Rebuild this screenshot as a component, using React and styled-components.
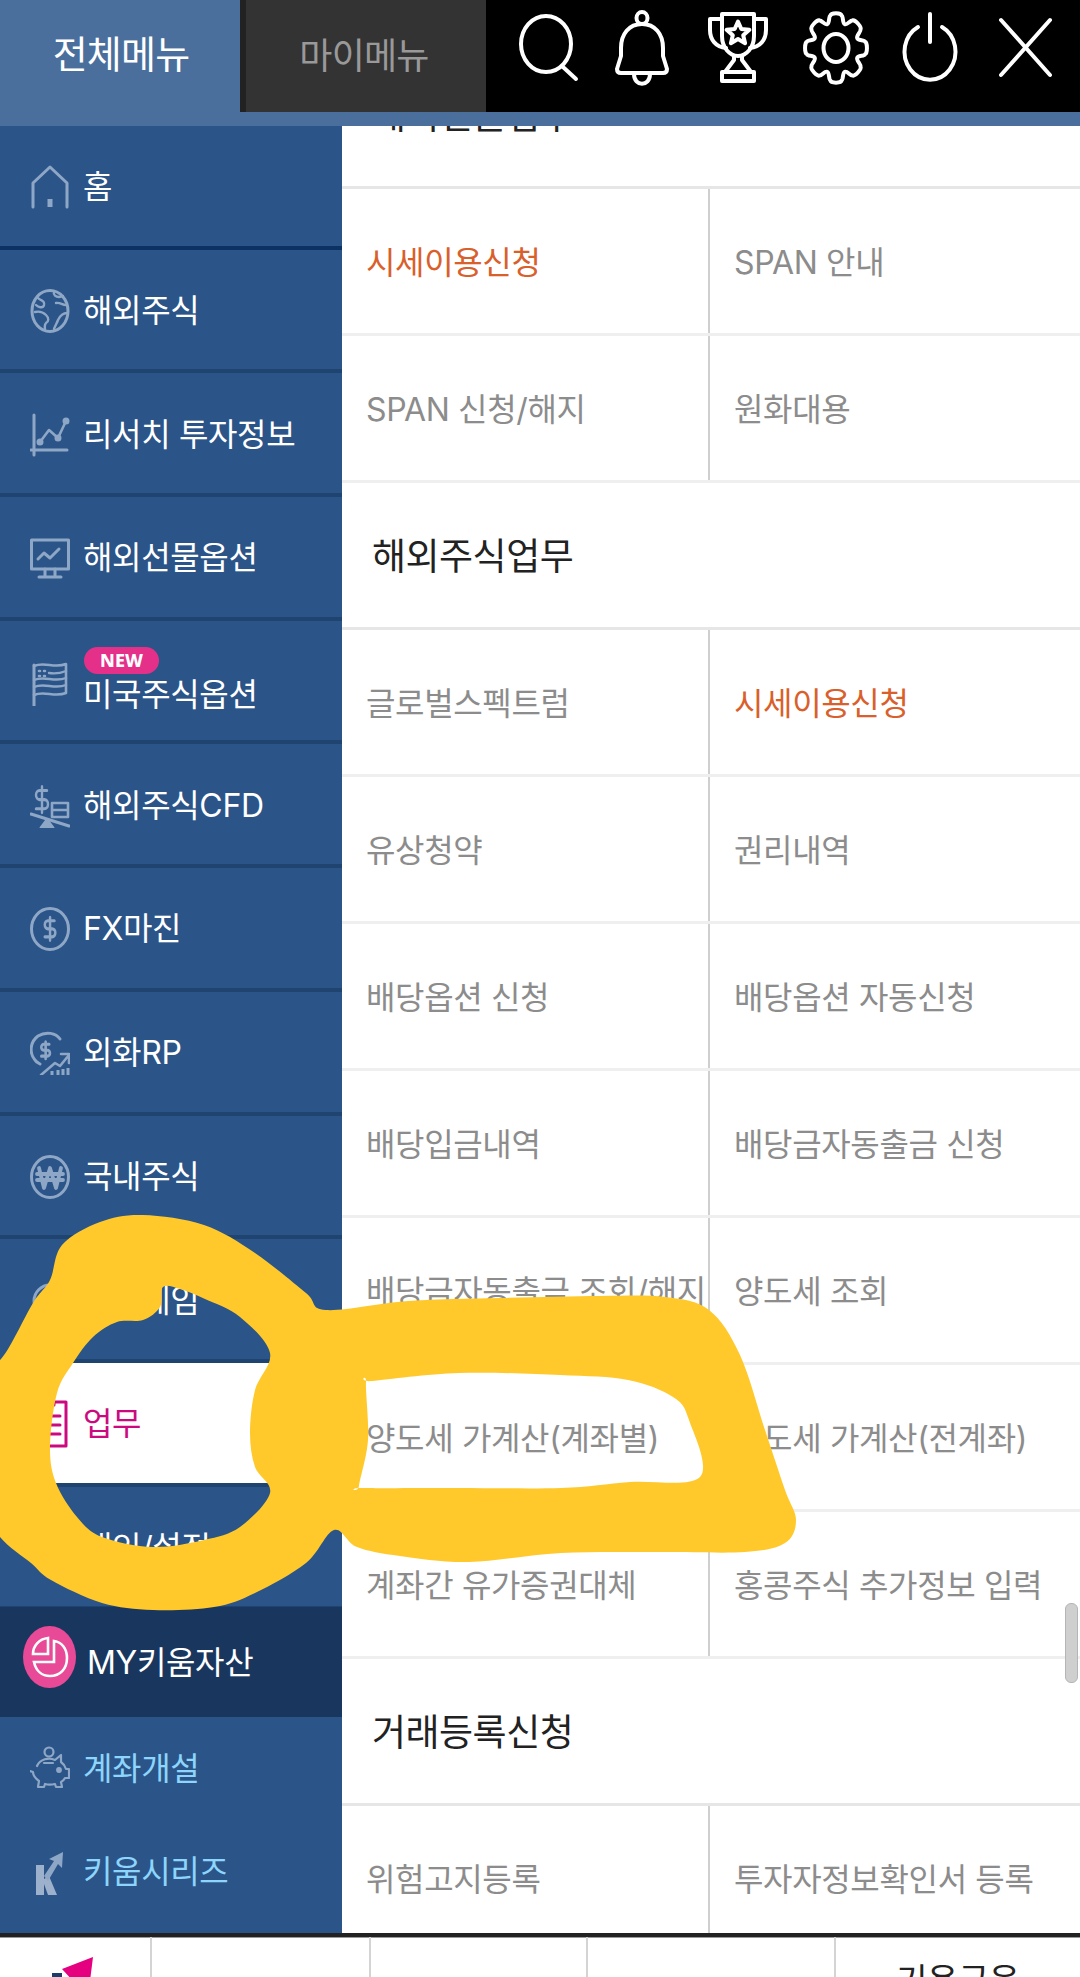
import styled, { createGlobalStyle } from "styled-components";

const GlobalStyle = createGlobalStyle`
  html, body {
    margin: 0;
    padding: 0;
    background: #fff;
  }
  body {
    font-family: "Inter", "Noto Sans CJK KR", sans-serif;
  }
`;

const Page = styled.div`
  position: relative;
  width: 1080px;
  height: 1977px;
  overflow: hidden;
  display: flex;
  flex-direction: column;
`;

const Header = styled.header`
  height: 126px;
  flex: none;
  background: #4a6f9c;
`;

const TopBar = styled.div`
  display: flex;
  height: 112px;
`;

const AllTab = styled.div`
  width: 240px;
  display: flex;
  align-items: center;
  justify-content: center;
  padding: 0 0 9px 2px;
  box-sizing: border-box;
  color: #fff;
  font-size: 38px;
  letter-spacing: -0.8px;
`;

const MyTab = styled.div`
  width: 246px;
  display: flex;
  align-items: center;
  justify-content: center;
  padding: 0 4px 6px 0;
  box-sizing: border-box;
  background: #333;
  border-left: 6px solid #222;
  color: #999;
  font-size: 36px;
  letter-spacing: -0.8px;
`;

const IconBar = styled.div`
  flex: 1;
  display: flex;
  background: #000;
  padding-left: 14px;
`;

const HeaderIcon = styled.svg`
  width: 96px;
  height: 96px;
  flex: none;
  fill: none;
  stroke: #fff;
  stroke-width: 4;
  stroke-linecap: round;
  stroke-linejoin: round;
`;

const Main = styled.main`
  flex: none;
  height: 1807px;
  display: flex;
`;

const Sidebar = styled.nav`
  width: 342px;
  flex: none;
  background: #2b5488;
  display: flex;
  flex-direction: column;
`;

const MenuList = styled.div`
  height: 1481px;
  flex: none;
  overflow: hidden;
`;

const MenuRow = styled.div`
  height: 123.7px;
  box-sizing: border-box;
  display: flex;
  align-items: center;
  padding: 3px 0 0 30px;
  gap: 13px;
  background: ${(props) => (props.$active ? "#fff" : "transparent")};
  border-bottom: 4px solid ${(props) => (props.$strong ? "#0c3263" : "#1f4470")};
  color: ${(props) => (props.$active ? "#cc0a80" : "#fff")};
`;

const MenuIcon = styled.svg`
  width: 40px;
  height: ${(props) => (props.$tall ? "48px" : "44px")};
  flex: none;
  fill: none;
  stroke: ${(props) => props.$color || "#8fa7c6"};
  stroke-width: 3;
  stroke-linecap: round;
  stroke-linejoin: round;
`;

const MenuLabel = styled.span`
  font-size: 32px;
  letter-spacing: -0.35px;
  line-height: 36px;
  white-space: nowrap;
`;

const LabelStack = styled.div`
  display: flex;
  flex-direction: column;
  align-items: flex-start;
  gap: 3px;
  margin-top: -4px;
`;

const NewBadge = styled.span`
  width: 75px;
  height: 27px;
  margin-left: 1px;
  border-radius: 14px;
  background: #e5308a;
  color: #fff;
  font-family: "Noto Sans", sans-serif;
  font-size: 18px;
  font-weight: 800;
  line-height: 27px;
  text-align: center;
`;

const AssetRow = styled.div`
  height: 110px;
  flex: none;
  background: #19375e;
  display: flex;
  align-items: center;
  padding: 2px 0 0 23px;
  gap: 11px;
  color: #fff;
  box-sizing: border-box;
`;

const AssetIcon = styled.div`
  width: 53px;
  height: 62px;
  margin-bottom: 12px;
  border-radius: 50%;
  background: #e84a97;
  display: flex;
  align-items: center;
  justify-content: center;
`;

const ExtraRow = styled.div`
  height: 103px;
  flex: none;
  display: flex;
  align-items: center;
  padding-left: 30px;
  gap: 13px;
  color: #8dd5fb;
`;

const Panel = styled.section`
  flex: 1;
  overflow: hidden;
  background: #fff;
`;

const PanelList = styled.div`
  margin-top: -84px;
`;

const Heading = styled.div`
  height: 147px;
  box-sizing: border-box;
  display: flex;
  align-items: center;
  padding: 0 0 2px 30px;
  border-bottom: 3px solid #e6e6e6;
  color: #222;
  font-size: 37px;
  letter-spacing: -0.5px;
`;

const CellRow = styled.div`
  height: 147px;
  box-sizing: border-box;
  display: grid;
  grid-template-columns: 368px 1fr;
  border-bottom: 3px solid #efefef;
`;

const Cell = styled.div`
  display: flex;
  align-items: center;
  padding: 0 0 2px 24px;
  box-sizing: border-box;
  font-size: 32px;
  letter-spacing: -0.35px;
  white-space: nowrap;
  color: ${(props) => (props.$accent ? "#d9602b" : "#8c8c8c")};
  &:first-child {
    border-right: 2px solid #cfcfcf;
  }
`;

const Footer = styled.footer`
  flex: none;
  height: 44px;
  border-top: 4px solid #222;
  box-sizing: border-box;
  display: grid;
  grid-template-columns: 150px 219px 217px 248px 1fr;
  background: #fff;
  box-shadow: inset 0 1px 0 #999;
`;

const FooterCell = styled.div`
  border-left: ${(props) => (props.$first ? "none" : "2px solid #d4d4d4")};
  text-align: center;
  color: #222;
  font-size: 34px;
  line-height: 36px;
  padding-top: 26px;
  letter-spacing: -0.4px;
`;

const FooterLogo = styled.svg`
  display: block;
  margin: -6px 0 0 50px;
  width: 50px;
  height: 24px;
`;

const ScrollThumb = styled.div`
  position: absolute;
  left: 1065px;
  top: 1603px;
  width: 13px;
  height: 80px;
  box-sizing: border-box;
  border-radius: 6px;
  background: #cfcfcf;
  border: 1px solid #b5b5b5;
`;

const Scribble = styled.svg`
  position: absolute;
  top: 0;
  left: 0;
  width: 1080px;
  height: 1977px;
  pointer-events: none;
`;

// closed Catmull-Rom curve through the points
function smooth(pts) {
  const n = pts.length;
  let d = `M${pts[0][0]} ${pts[0][1]}`;
  for (let i = 0; i < n; i++) {
    const p0 = pts[(i - 1 + n) % n];
    const p1 = pts[i];
    const p2 = pts[(i + 1) % n];
    const p3 = pts[(i + 2) % n];
    const c1x = p1[0] + (p2[0] - p0[0]) / 6;
    const c1y = p1[1] + (p2[1] - p0[1]) / 6;
    const c2x = p2[0] - (p3[0] - p1[0]) / 6;
    const c2y = p2[1] - (p3[1] - p1[1]) / 6;
    d += `C${c1x} ${c1y} ${c2x} ${c2y} ${p2[0]} ${p2[1]}`;
  }
  return d + "Z";
}

const outer = [
  [50, 1280], [62, 1245], [100, 1222], [143, 1215], [204, 1225], [255, 1253], [306, 1293],
  [326, 1310], [408, 1301], [500, 1298], [600, 1296], [665, 1297], [709, 1310], [740, 1355],
  [765, 1430], [785, 1490], [796, 1520], [785, 1543], [745, 1552], [660, 1552], [561, 1553],
  [469, 1562], [400, 1556], [357, 1547], [334, 1530], [306, 1563], [255, 1593], [214, 1607],
  [153, 1610], [102, 1603], [51, 1580], [31, 1563], [0, 1537], [-20, 1500], [-20, 1350], [0, 1360], [33, 1303],
];
const ringHole = [
  [163, 1287], [160, 1307], [143, 1320], [117, 1322], [93, 1337], [73, 1363], [57, 1393],
  [50, 1447], [56, 1483], [77, 1517], [102, 1537], [153, 1547], [204, 1540], [240, 1527],
  [270, 1493], [255, 1467], [250, 1433], [255, 1390], [270, 1353], [240, 1317], [205, 1299], [180, 1289],
];
const boxHole = [
  [366, 1382], [372, 1381], [459, 1373], [560, 1375], [628, 1380], [673, 1397], [689, 1420], [700, 1477],
  [630, 1482], [561, 1488], [459, 1488], [362, 1488], [359, 1486], [368, 1440],
];

function gearPath() {
  const cx = 48;
  const cy = 48;
  const pt = (deg, r) => {
    const a = (deg * Math.PI) / 180;
    return `${(cx + r * Math.cos(a)).toFixed(1)} ${(cy + r * 1.12 * Math.sin(a)).toFixed(1)}`;
  };
  let d = "";
  for (let i = 0; i < 8; i++) {
    const t = i * 45 - 90;
    d += `${i === 0 ? "M" : "L"}${pt(t - 22.5, 23)}`;
    d += `C${pt(t - 16, 23)} ${pt(t - 15, 29)} ${pt(t - 11, 29.5)}`;
    d += `C${pt(t - 9, 32)} ${pt(t + 9, 32)} ${pt(t + 11, 29.5)}`;
    d += `C${pt(t + 15, 29)} ${pt(t + 16, 23)} ${pt(t + 22.5, 23)}`;
  }
  return d + "Z";
}

const dollar = "M17 5H9.5a3.5 3.5 0 0 0 0 7h5a3.5 3.5 0 0 1 0 7H6M12 2v20";

const iconPaths = {
  home: (
    <>
      <path d="M3 42V18L20 2l17 16v24" />
      <path d="M20 34v8" strokeWidth="5" strokeLinecap="butt" />
    </>
  ),
  globe: (
    <>
      <ellipse cx="20" cy="22" rx="18" ry="20.5" />
      <path d="M8 9c3 3 7 2 6 7-1 4-6 2-8 0M5 23c4-1 8 0 11 3 3 3 3 6 0 8-2 2-1 5-1 7M24 3c-1 3 2 5 5 5 2 0 4-1 4-1M26 14c4-1 6 2 10 2M37 24c-4 0-7 3-9 7-1 3-3 6-4 9" strokeWidth="2.4" />
    </>
  ),
  chart: (
    <>
      <path d="M4 2v40M1 37h36" />
      <path d="M10 29l9-12 9 8 8-17" strokeWidth="2.6" />
      <circle cx="10" cy="29" r="2" fill="#8fa7c6" />
      <circle cx="28" cy="25" r="2" fill="#8fa7c6" />
      <circle cx="36" cy="8" r="2" fill="#8fa7c6" />
    </>
  ),
  monitor: (
    <>
      <rect x="1.5" y="4" width="37" height="29" />
      <path d="M8 23l6-6 6 5 9-9" />
      <path d="M15 33v7M25 33v7M9 41h22" />
    </>
  ),
  flag: (
    <>
      <path d="M4 7v41" />
      <path d="M4 8c11-5 20 3 32-2v29c-12 5-21-3-32 2" strokeWidth="2.6" />
      <path d="M4 22c11-5 20 3 32-2M4 29c11-5 20 3 32-2M19 15c6 1 12 0 17-2" strokeWidth="2.4" />
      <path d="M9 13h1M14 13h1M9 18h1M14 18h1" strokeWidth="2.6" />
    </>
  ),
  balance: (
    <>
      <g transform="translate(0 0) scale(1 1.3)">
        <path d={dollar} strokeWidth="2.4" />
      </g>
      <rect x="22" y="19" width="16" height="14" strokeWidth="2.6" />
      <path d="M23 26h14" strokeWidth="2.4" />
      <path d="M1 30l38 12" />
      <path d="M17 36l6 8H11z" fill="#8fa7c6" />
    </>
  ),
  dollar: (
    <>
      <ellipse cx="20" cy="22" rx="18.5" ry="20.5" />
      <g transform="translate(9.5 8) scale(.88 1.15)">
        <path d={dollar} strokeWidth="2.8" />
      </g>
    </>
  ),
  rp: (
    <>
      <path d="M30 8C26 2 16 0 8 5 0 11-1 22 5 29c1 2 3 3 5 4" />
      <g transform="translate(7 9) scale(.72 .85)">
        <path d={dollar} strokeWidth="3.6" />
      </g>
      <path d="M11 44l14-12 5 3 9-11M31 23h8v9" strokeWidth="2.6" />
      <path d="M22 44v-4M28 44v-5M33 44v-6M38 44v-7" strokeWidth="3" strokeLinecap="butt" />
    </>
  ),
  won: (
    <>
      <ellipse cx="20" cy="22" rx="18.5" ry="20.5" />
      <path d="M9 13l5 20 6-20 6 20 5-20M7 19h26M7 25h26" strokeWidth="3.8" />
    </>
  ),
  game: <circle cx="20" cy="22" r="16" />,
  doc: (
    <>
      <path d="M5 2h31v44H5zM14 2v3M24 2v3" stroke="#cc0a80" />
      <path d="M11 16h19M11 25h19M11 34h19" stroke="#cc0a80" />
    </>
  ),
  settings: <circle cx="20" cy="22" r="16" />,
  piggy: (
    <>
      <circle cx="19" cy="7" r="4.5" strokeWidth="2.2" />
      <path d="M7 21c3-7 12-9 18-6l6-5v7c3 2 4 4 5 7h3v9h-4c-1 2-2 3-4 4l1 5h-6l-1-3c-4 1-7 1-10 0l-1 3H8l1-6c-4-3-6-6-6-9l-3-1" strokeWidth="2.2" />
      <path d="M14 18h9" strokeWidth="2.2" />
      <circle cx="29" cy="25" r="1.4" fill="#8fa7c6" />
    </>
  ),
  series: (
    <>
      <path d="M6 17h8v14l5-3 8 19h-9l-4-11v11H6z" fill="#9db0cc" stroke="none" />
      <path d="M14 28l10-15-5-2 14-7-1 16-4-4-10 17z" fill="#8fa7c6" stroke="none" />
    </>
  ),
};

function Icon({ name }) {
  const tall = name === "doc" || name === "piggy" || name === "flag" || name === "series";
  return (
    <MenuIcon viewBox={tall ? "0 0 40 48" : "0 0 40 44"} $tall={tall}>
      {iconPaths[name]}
    </MenuIcon>
  );
}

const menus = [
  { label: "홈", icon: "home", strong: true },
  { label: "해외주식", icon: "globe" },
  { label: "리서치 투자정보", icon: "chart" },
  { label: "해외선물옵션", icon: "monitor" },
  { label: "미국주식옵션", icon: "flag", isNew: true },
  { label: "해외주식CFD", icon: "balance" },
  { label: "FX마진", icon: "dollar" },
  { label: "외화RP", icon: "rp" },
  { label: "국내주식", icon: "won" },
  { label: "모의게임", icon: "game" },
  { label: "업무", icon: "doc", active: true },
  { label: "개인/설정", icon: "settings" },
];

const panelRows = [
  { title: "해외선물업무" },
  { cells: [{ text: "시세이용신청", accent: true }, { text: "SPAN 안내" }] },
  { cells: [{ text: "SPAN 신청/해지" }, { text: "원화대용" }] },
  { title: "해외주식업무" },
  { cells: [{ text: "글로벌스펙트럼" }, { text: "시세이용신청", accent: true }] },
  { cells: [{ text: "유상청약" }, { text: "권리내역" }] },
  { cells: [{ text: "배당옵션 신청" }, { text: "배당옵션 자동신청" }] },
  { cells: [{ text: "배당입금내역" }, { text: "배당금자동출금 신청" }] },
  { cells: [{ text: "배당금자동출금 조회/해지" }, { text: "양도세 조회" }] },
  { cells: [{ text: "양도세 가계산(계좌별)" }, { text: "양도세 가계산(전계좌)" }] },
  { cells: [{ text: "계좌간 유가증권대체" }, { text: "홍콩주식 추가정보 입력" }] },
  { title: "거래등록신청" },
  { cells: [{ text: "위험고지등록" }, { text: "투자자정보확인서 등록" }] },
];

function HeaderIcons() {
  return (
    <IconBar>
      <HeaderIcon viewBox="0 0 96 96">
        <ellipse cx="46" cy="44" rx="25" ry="28" />
        <path d="M63 67l13 12" />
      </HeaderIcon>
      <HeaderIcon viewBox="0 0 96 96">
        <path d="M46 24C33 24 25 34 25 48v8l-4 13q0 4 4 4h42q4 0 4-4l-4-13v-8C67 34 59 24 46 24z" />
        <ellipse cx="46" cy="18" rx="5.5" ry="6" />
        <path d="M38 74c0 13 16 13 16 0" />
      </HeaderIcon>
      <HeaderIcon viewBox="0 0 96 96">
        <path d="M30 14h32v22c0 12-8 20-16 20s-16-8-16-20z" />
        <path d="M30 19H18v11c0 10 6 17 16 18M62 19h12v11c0 10-6 17-16 18" />
        <path d="M42 56v4l-9 12M50 56v4l9 12" />
        <rect x="30" y="72" width="32" height="9" />
        <polygon points="46,21.5 49.3,29 57.4,29.8 51.2,35.2 53.1,43.2 46,39 38.9,43.2 40.8,35.2 34.6,29.8 42.7,29" />
      </HeaderIcon>
      <HeaderIcon viewBox="0 0 96 96">
        <path d={gearPath()} />
        <ellipse cx="48" cy="48" rx="12.5" ry="14" />
      </HeaderIcon>
      <HeaderIcon viewBox="0 0 96 96">
        <path d="M34 27A25.5 28 0 1 0 58 27" />
        <path d="M46 14v28" />
      </HeaderIcon>
      <HeaderIcon viewBox="0 0 96 96">
        <path d="M21 20l49 55M70 20L21 75" />
      </HeaderIcon>
    </IconBar>
  );
}

export default function App() {
  return (
    <>
      <GlobalStyle />
      <Page>
        <Header>
          <TopBar>
            <AllTab>전체메뉴</AllTab>
            <MyTab>마이메뉴</MyTab>
            <HeaderIcons />
          </TopBar>
        </Header>
        <Main>
          <Sidebar>
            <MenuList>
              {menus.map((m) => (
                <MenuRow key={m.label} $active={m.active} $strong={m.strong}>
                  <Icon name={m.icon} />
                  {m.isNew ? (
                    <LabelStack>
                      <NewBadge>NEW</NewBadge>
                      <MenuLabel>{m.label}</MenuLabel>
                    </LabelStack>
                  ) : (
                    <MenuLabel>{m.label}</MenuLabel>
                  )}
                </MenuRow>
              ))}
            </MenuList>
            <AssetRow>
              <AssetIcon>
                <svg width="38" height="44" viewBox="0 0 38 44" fill="none" stroke="#fff" strokeWidth="2.6">
                  <path d="M17 3C8 4 2 11 2 19h15zM23 6c8 1 13 8 13 17 0 11-7 18-17 18-8 0-14-5-16-14h20z" />
                </svg>
              </AssetIcon>
              <MenuLabel>MY키움자산</MenuLabel>
            </AssetRow>
            <ExtraRow>
              <Icon name="piggy" />
              <MenuLabel>계좌개설</MenuLabel>
            </ExtraRow>
            <ExtraRow>
              <Icon name="series" />
              <MenuLabel>키움시리즈</MenuLabel>
            </ExtraRow>
          </Sidebar>
          <Panel>
            <PanelList>
              {panelRows.map((row, i) =>
                row.title ? (
                  <Heading key={i}>{row.title}</Heading>
                ) : (
                  <CellRow key={i}>
                    {row.cells.map((c) => (
                      <Cell key={c.text} $accent={c.accent}>
                        {c.text}
                      </Cell>
                    ))}
                  </CellRow>
                )
              )}
            </PanelList>
          </Panel>
        </Main>
        <Footer>
          <FooterCell $first>
            <FooterLogo viewBox="0 0 50 24">
              <polygon points="12,12 43,0 40,24 23,24" fill="#e4007f" />
              <rect x="2" y="16" width="10" height="8" fill="#1d3c6a" />
            </FooterLogo>
          </FooterCell>
          <FooterCell />
          <FooterCell />
          <FooterCell />
          <FooterCell>기용금융</FooterCell>
        </Footer>
        <ScrollThumb />
        <Scribble viewBox="0 0 1080 1977">
          <path
            d={smooth(outer) + smooth(ringHole) + smooth(boxHole)}
            fill="#ffc92c"
            fillRule="evenodd"
          />
        </Scribble>
      </Page>
    </>
  );
}
